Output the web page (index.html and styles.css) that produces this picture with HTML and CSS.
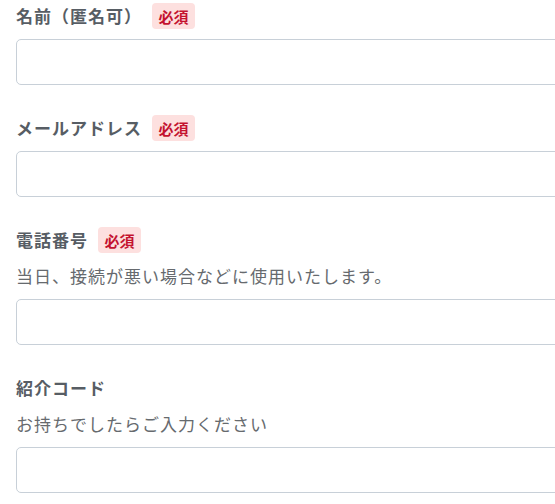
FILE: index.html
```html
<!DOCTYPE html>
<html lang="ja">
<head>
<meta charset="utf-8">
<title>フォーム</title>
<link rel="stylesheet" href="styles.css">
</head>
<body>
<div class="page">
  <form class="form">
    <div class="field">
      <div class="label-row">
        <label class="label" for="name">名前（匿名可）</label>
        <span class="badge">必須</span>
      </div>
      <input class="input" id="name" type="text">
    </div>
    <div class="field">
      <div class="label-row">
        <label class="label" for="email">メールアドレス</label>
        <span class="badge">必須</span>
      </div>
      <input class="input" id="email" type="email">
    </div>
    <div class="field">
      <div class="label-row">
        <label class="label" for="tel">電話番号</label>
        <span class="badge">必須</span>
      </div>
      <p class="desc">当日、接続が悪い場合などに使用いたします。</p>
      <input class="input" id="tel" type="tel">
    </div>
    <div class="field">
      <div class="label-row">
        <label class="label" for="code">紹介コード</label>
      </div>
      <p class="desc">お持ちでしたらご入力ください</p>
      <input class="input" id="code" type="text">
    </div>
  </form>
</div>
</body>
</html>
```
FILE: styles.css
```css
html, body {
  margin: 0;
  padding: 0;
  background: #ffffff;
}
body {
  font-family: "Noto Sans CJK JP", "Noto Sans", sans-serif;
  overflow: hidden;
}
.page {
  width: 554px;
  height: 504px;
  border-right: 1px solid #e9f1e3;
  overflow: hidden;
  padding: 3px 0 0 16px;
  box-sizing: content-box;
}
.form {
  display: flex;
  flex-direction: column;
  gap: 30px;
  width: 580px;
}
.field {
  display: flex;
  flex-direction: column;
}
.label-row {
  display: flex;
  align-items: center;
  gap: 10px;
  height: 26px;
  margin-bottom: 10px;
}
.label {
  font-size: 17px;
  font-weight: 700;
  letter-spacing: 1px;
  color: #575d64;
  line-height: 26px;
}
.badge {
  display: inline-flex;
  align-items: center;
  justify-content: center;
  height: 26px;
  padding: 0 6.5px;
  border-radius: 4px;
  background: #fde0df;
  color: #c4122f;
  font-size: 15px;
  font-weight: 700;
  line-height: 1;
}
.desc {
  margin: 1px 0 11px;
  font-size: 17px;
  line-height: 24px;
  letter-spacing: 1px;
  color: #666a6e;
}
.input {
  display: block;
  box-sizing: border-box;
  width: 100%;
  height: 46px;
  margin: 0;
  border: 1px solid #c8d0d8;
  border-radius: 5px;
  background: #ffffff;
  font: inherit;
}
```
